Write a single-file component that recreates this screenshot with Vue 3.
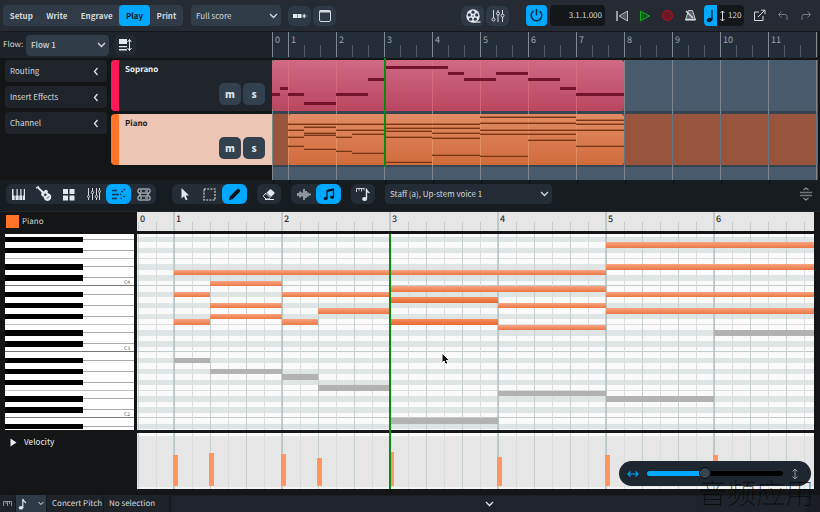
<script setup>
import { ref, computed, onMounted, onUnmounted } from 'vue'

const modes = ['Setup', 'Write', 'Engrave', 'Play', 'Print']
const mode = ref('Play')
const layout = ref('Full score')
const flow = ref('Flow 1')
const voice = ref('Staff (a), Up-stem voice 1')
const zoom = ref(42)

const panels = ['Routing', 'Insert Effects', 'Channel']
const tracks = [
  { name: 'Soprano', cls: 'soprano' },
  { name: 'Piano', cls: 'piano' }
]

// [start beat, length in beats, semitones from C4], 3/4 time, beat 0 = bar 1
const pianoNotes = [
  [0, 12, 2], [1, 2, 0], [0, 1, -2], [1, 2, -4], [1, 2, -6], [0, 1, -7],
  [3, 3, -2], [4, 2, -5], [3, 1, -7],
  [6, 6, -1], [6, 3, -3, 'hot'], [6, 3, -7, 'hot'],
  [9, 3, -4], [9, 3, -8],
  [12, 6, 7], [12, 6, 3], [12, 9, -2], [12, 6, -5],
  [18, 3, 5], [18, 3, 2], [18, 3, -14],
  [15, 3, -9, 'low'], [0, 1, -14, 'low'], [1, 2, -16, 'low'], [3, 1, -17, 'low'],
  [4, 2, -19, 'low'], [6, 3, -25, 'low'], [9, 3, -20, 'low'], [12, 3, -21, 'low']
]

// [x, width, y] in the soprano lane
const sopranoNotes = [
  [0, 8, 61], [8, 8, 55], [16, 16, 61], [32, 32, 70], [64, 32, 61], [96, 16, 46],
  [112, 64, 34], [176, 16, 40], [192, 32, 46], [224, 32, 40], [256, 32, 46],
  [288, 16, 55], [304, 48, 61]
]

// [beat, height]
const velocities = [[0, 31], [1, 33], [3, 32], [4, 28], [6, 34], [9, 29], [12, 31], [15, 31]]

const BLACK = [1, 3, 6, 8, 10]

const winWidth = ref(window.innerWidth)
const onResize = () => { winWidth.value = window.innerWidth }
onMounted(() => window.addEventListener('resize', onResize))
onUnmounted(() => window.removeEventListener('resize', onResize))

const range = n => Array.from({ length: Math.max(0, Math.ceil(n)) }, (_, i) => i)

// widths of the two timelines follow the window
const overviewWidth = computed(() => winWidth.value - 274)
const rollWidth = computed(() => winWidth.value - 143)

const barX = n => 16 + (n - 1) * 48
const rollBarX = n => 37 + (n - 1) * 108
const beatX = b => 37 + b * 36
const rowY = k => Math.round(74 - (k + 1) * 5.5)
const rowH = k => rowY(k - 1) - rowY(k)

const bars = computed(() => range((overviewWidth.value - 16) / 48).map(i => i + 1))
const barLabels = computed(() => bars.value.filter(n => barX(n) + 20 < overviewWidth.value))
const ticks = computed(() => range(overviewWidth.value / 16))
const rollBars = computed(() => range((rollWidth.value - 57) / 108).map(i => i + 1))
const rollTicks = computed(() => range(rollWidth.value / 18))

const overviewNotes = computed(() => pianoNotes.map(([start, len, k]) => ({
  x: 16 + start * 16,
  w: len * 16,
  y: 95 - Math.round(k * 1.39)
})))

const rollNotes = computed(() => pianoNotes.map(([start, len, k, kind]) => ({
  x: beatX(start),
  w: len * 36,
  y: rowY(k),
  h: rowH(k),
  kind: kind || 'warm'
})))

const rows = computed(() => {
  const list = []
  for (let k = 9; k >= -27; k--) {
    const pc = ((k % 12) + 12) % 12
    list.push({ k, pc, y: rowY(k), h: rowH(k), black: BLACK.includes(pc), octave: 4 + Math.floor(k / 12) })
  }
  return list
})
const blackRows = computed(() => rows.value.filter(r => r.black))
const cRows = computed(() => rows.value.filter(r => r.pc === 0))
const fRows = computed(() => rows.value.filter(r => r.pc === 5))
</script>

<template>
  <div class="app">
    <header class="topbar">
      <nav class="modes">
        <button v-for="m in modes" :key="m" :class="{ active: mode === m }" @click="mode = m">{{ m }}</button>
      </nav>
      <div class="select layout-select">
        <select v-model="layout" aria-label="Layout"><option>Full score</option></select>
        <svg class="chev" width="9" height="6" viewBox="0 0 9 6"><path d="M1 1l3.5 3.5L8 1" /></svg>
      </div>
      <div class="pair">
        <button class="tool" aria-label="Add tab">
          <svg width="15" height="12" viewBox="0 0 15 12"><path d="M1 4h4v4H1zM5.500 4h4v4h-4z" fill="#e3e8ec" /><path d="M10 6h4.500M12.200 3.800v4.400" stroke="#e3e8ec" stroke-width="1.200" /></svg>
        </button>
        <button class="tool" aria-label="Window">
          <svg width="14" height="14" viewBox="0 0 14 14"><rect x="1.500" y="1.500" width="11" height="11" rx="1.500" fill="none" stroke="#d5dade" /><path d="M1.500 2.500h11" stroke="#d5dade" stroke-width="2" /></svg>
        </button>
      </div>

      <div class="transport">
        <div class="pair">
          <button class="tool" aria-label="Video">
            <svg width="16" height="16" viewBox="0 0 16 16">
              <circle cx="8" cy="8" r="6.700" fill="#e3e8ec" />
              <g fill="#2e3b47"><circle cx="8" cy="4.200" r="1.600" /><circle cx="4.300" cy="6.900" r="1.600" /><circle cx="11.700" cy="6.900" r="1.600" /><circle cx="5.700" cy="11.200" r="1.600" /><circle cx="10.300" cy="11.200" r="1.600" /><circle cx="8" cy="8" r=".7" /></g>
              <path d="M8 14h7.500" stroke="#dfe4e8" stroke-width="1.200" />
            </svg>
          </button>
          <button class="tool" aria-label="Mixer">
            <svg class="line" width="14" height="14" viewBox="0 0 14 14"><path d="M2.500 1v8M7 1v2M7 6v7M11.500 1v4M11.500 8v5" /><circle cx="2.500" cy="10.500" r="1.500" /><circle cx="7" cy="4.500" r="1.500" /><circle cx="11.500" cy="6.500" r="1.500" /></svg>
          </button>
        </div>
        <button class="power" aria-label="Power">
          <svg width="15" height="15" viewBox="0 0 15 15"><path d="M4.500 3a5.300 5.300 0 1 0 6 0M7.500 1v6.500" fill="none" stroke="#10283a" stroke-width="1.500" /></svg>
        </button>
        <output class="time">3.1.1.000</output>
        <div class="buttons">
          <button class="flat" aria-label="Rewind">
            <svg width="14" height="12" viewBox="0 0 14 12"><path d="M2 1v10" stroke="#c0c4c8" stroke-width="1.500" /><path d="M12.500 1v10L4 6z" fill="#55595e" stroke="#b5b9bd" stroke-linejoin="round" /></svg>
          </button>
          <button class="flat" aria-label="Start">
            <svg width="12" height="12" viewBox="0 0 12 12"><path d="M1.500 1.200v9.600L10.500 6z" fill="#12541f" stroke="#10b41e" stroke-linejoin="round" /></svg>
          </button>
          <button class="flat" aria-label="Record">
            <svg width="13" height="13" viewBox="0 0 13 13"><circle cx="6.500" cy="6.500" r="5" fill="#6b1822" stroke="#b80d22" /></svg>
          </button>
          <button class="flat" aria-label="Click">
            <svg width="13" height="13" viewBox="0 0 13 13"><path d="M4.500 1.500h4l3 9.500h-10z" fill="#5b6066" stroke="#c4c8cc" stroke-linejoin="round" /><path d="M2 2l7 7" stroke="#e0e3e6" stroke-width="1.200" /><path d="M1.500 10.500h10" stroke="#d5d8db" stroke-width="1.500" /></svg>
          </button>
        </div>
        <div class="tempo">
          <button aria-label="Tempo mode">
            <svg width="9" height="16" viewBox="0 0 9 16"><ellipse cx="3.500" cy="12" rx="2.800" ry="2" fill="#0c1a26" transform="rotate(-20 3.500 12)" /><path d="M6 2v10" stroke="#0c1a26" stroke-width="1.200" /></svg>
          </button>
          <svg class="line" width="7" height="12" viewBox="0 0 7 12"><path d="M3.500 1v10M1.500 3l2-2 2 2M1.500 9l2 2 2-2" /></svg>
          <span>120</span>
        </div>
        <div class="buttons">
          <button class="flat" aria-label="Export">
            <svg class="line" width="13" height="13" viewBox="0 0 13 13"><path d="M6 3H1.500v8.500H10V7M5 8l6.500-6.500M8 1.200h4v4" /></svg>
          </button>
          <button class="flat" aria-label="Undo">
            <svg class="line dim" width="12" height="12" viewBox="0 0 12 12"><path d="M4.500 1.500l-3 3 3 3M1.500 4.500H8q2 0 2 2V10" /></svg>
          </button>
          <button class="flat" aria-label="Redo">
            <svg class="line dim" width="12" height="12" viewBox="0 0 12 12"><path d="M7.500 1.500l3 3-3 3M10.500 4.500H4q-2 0-2 2V10" /></svg>
          </button>
        </div>
      </div>
    </header>

    <section class="overview">
      <div class="side">
        <div class="flowbar">
          <label for="flow">Flow:</label>
          <div class="select flow-select">
            <select id="flow" v-model="flow"><option>Flow 1</option></select>
            <svg class="chev" width="9" height="6" viewBox="0 0 9 6"><path d="M1 1l3.5 3.5L8 1" /></svg>
          </div>
          <button class="sort" aria-label="Track height">
            <svg width="14" height="14" viewBox="0 0 14 14"><path d="M1 1h8v5H1zM1 8h8v1.300H1zM1 11h8v1.500H1z" fill="#e3e8ec" /><path d="M11.500 1.500v11M9.500 4l2-2.500 2 2.500M9.500 10l2 2.500 2-2.500" fill="none" stroke="#e3e8ec" /></svg>
          </button>
        </div>
        <div class="side-body">
          <div class="panels">
            <button v-for="p in panels" :key="p" class="panel">
              {{ p }}
              <svg width="6" height="9" viewBox="0 0 6 9"><path d="M4.500 1L1.500 4.500l3 3.500" fill="none" stroke="#e0e4e8" stroke-width="1.300" /></svg>
            </button>
          </div>
          <div class="cards">
            <div v-for="t in tracks" :key="t.name" class="card" :class="t.cls">
              <h3>{{ t.name }}</h3>
              <div class="ms">
                <button aria-label="Mute">m</button>
                <button aria-label="Solo">s</button>
              </div>
            </div>
          </div>
        </div>
      </div>

      <svg class="arrange" height="148">
        <defs>
          <linearGradient id="pink" x2="0" y2="1"><stop stop-color="#cf6a85" /><stop offset="1" stop-color="#ba4660" /></linearGradient>
          <linearGradient id="amber" x2="0" y2="1"><stop stop-color="#e28b65" /><stop offset="1" stop-color="#d06b3c" /></linearGradient>
        </defs>
        <!-- ruler -->
        <rect width="100%" height="26" fill="#232e39" />
        <rect v-for="t in ticks" :key="'t' + t" :x="t * 16" y="13" width="1" height="12" fill="#4e5a65" />
        <rect width="1" height="25" fill="#808a92" />
        <text x="3" y="11" class="bar-no">0</text>
        <rect v-for="n in bars" :key="'b' + n" :x="barX(n)" width="1" height="25" fill="#808a92" />
        <text v-for="n in barLabels" :key="'n' + n" :x="barX(n) + 3" y="11" class="bar-no">{{ n }}</text>
        <!-- lanes -->
        <rect y="28" width="100%" height="120" fill="#485b6c" />
        <rect y="79" width="100%" height="3" fill="#394452" />
        <rect y="82" width="100%" height="51" fill="#98553c" />
        <rect y="133" width="100%" height="2" fill="#394452" />
        <g v-for="n in bars" :key="'l' + n">
          <rect :x="barX(n)" y="28" width="1" height="120" fill="#7d868b" />
          <rect :x="barX(n)" y="82" width="1" height="51" fill="#647681" />
        </g>
        <rect y="28" width="1" height="120" fill="#7d868b" />
        <rect y="28" width="352" height="51" rx="4" fill="url(#pink)" />
        <rect x="16" y="82" width="336" height="51" rx="4" fill="url(#amber)" />
        <rect v-for="n in 7" :key="'o' + n" :x="barX(n)" y="28" width="1" height="51" class="through pinkish" />
        <rect v-for="n in 7" :key="'q' + n" :x="barX(n)" y="82" width="1" height="51" class="through" />
        <rect v-for="(n, i) in sopranoNotes" :key="'s' + i" :x="n[0]" :y="n[2]" :width="n[1]" height="3" fill="#74132a" />
        <g v-for="(n, i) in overviewNotes" :key="'p' + i">
          <rect :x="n.x" :y="n.y - 1" :width="n.w" height="2" fill="#b86238" />
          <rect :x="n.x" :y="n.y" :width="n.w" height="1" fill="#7a3416" />
        </g>
        <rect x="112" y="26" width="2" height="109" fill="#0a8a0e" />
      </svg>
    </section>

    <div class="toolbar">
      <div class="group">
        <button aria-label="Keyboard">
          <svg width="15" height="13" viewBox="0 0 15 13"><path d="M1 1h1.500v6.500h1.200V12H1zM4.500 7.500h1V1h1.200v6.500h1V12H4.500zM8.300 7.500h1V1h1.200v6.500h.8V12h-3zM12.800 1h1.200v11h-2V7.500h.8z" fill="#e3e8ec" /></svg>
        </button>
        <button aria-label="Guitar">
          <svg width="16" height="16" viewBox="0 0 16 16"><path d="M2 1.500l7 7" stroke="#e3e8ec" stroke-width="1.800" /><path d="M0 2.200L2.800.4" stroke="#e3e8ec" stroke-width="1.500" /><path d="M5.200 8.500q-.3-2 1.500-2.800 1.500-.2 2-1.500 1.500-1.200 2.800.2 1 1.200 0 2.600 3 .6 3.800 3.200.3 3-2 4.300-3 1.200-5-1.300-.8-1.300-.6-2.600-2.200.4-2.500-2.100z" fill="#e3e8ec" /><circle cx="9.300" cy="8.800" r="1.200" fill="#242c36" /><path d="M11 12.500l2-2" stroke="#242c36" /></svg>
        </button>
        <button aria-label="Drum pads">
          <svg width="13" height="13" viewBox="0 0 13 13"><path d="M1 1h5v5H1zM7.500 1h5v5h-5zM1 7.500h5v5H1zM7.500 7.500h5v5h-5z" fill="#e3e8ec" /></svg>
        </button>
        <button aria-label="Mixer">
          <svg class="line" width="14" height="14" viewBox="0 0 14 14"><path d="M1.500 1v7M1.500 11v2M5.500 1v3M5.500 7v6M9.500 1v7M9.500 11v2M12.500 1v2M12.500 6v7" /><circle cx="1.500" cy="9.500" r="1" /><circle cx="5.500" cy="5.500" r="1.200" /><circle cx="9.500" cy="9.500" r="1.200" /><circle cx="12.500" cy="4.500" r="1" /></svg>
        </button>
        <button class="active" aria-label="Key editor">
          <svg width="15" height="13" viewBox="0 0 15 13"><path d="M1 2.500h5M1 6.500h7M1 10.500h5M10 3.500h2M9 6.500h1M12 8.500h2M9.500 10.500h1.500M12.500 1.500h1.500" stroke="#103a58" stroke-width="1.500" fill="none" /></svg>
        </button>
        <button aria-label="Rack">
          <svg class="line" width="14" height="13" viewBox="0 0 14 13"><rect x="1" y="1" width="12" height="4" rx="1" /><rect x="1" y="8" width="12" height="4" rx="1" /><path d="M3 3h2M8 3h3M3 10h2M8 10h3M3 5v3M11 5v3" /></svg>
        </button>
      </div>
      <div class="group tools">
        <button aria-label="Select">
          <svg width="10" height="14" viewBox="0 0 10 14"><path d="M1.500 1v10.500L4 9.200l1.700 4 1.800-.8-1.700-3.800 3.300-.2z" fill="#e3e8ec" /></svg>
        </button>
        <button aria-label="Marquee">
          <svg width="13" height="13" viewBox="0 0 13 13"><rect x="1" y="1" width="11" height="11" fill="none" stroke="#d8dde1" stroke-width="1.200" stroke-dasharray="2 1.200" /></svg>
        </button>
        <button class="active" aria-label="Draw">
          <svg width="13" height="13" viewBox="0 0 13 13"><path d="M.8 12.200l1.200-4L8.800 1.400q1.500-1.200 2.800 0 1.200 1.200 0 2.700L4.800 11z" fill="#06121c" /></svg>
        </button>
      </div>
      <button class="single" aria-label="Erase">
        <svg width="14" height="13" viewBox="0 0 14 13"><path d="M7.800 1.500q.8-.6 1.500 0l3 2.800q.6.700 0 1.400L9 9 4.600 4.700z" fill="#e3e8ec" /><path d="M4 5.400l4.200 4.200L6.700 11H4L1.500 8.500q-.5-.6 0-1.100z" fill="none" stroke="#e3e8ec" /><path d="M3 11.500h9" stroke="#e3e8ec" /></svg>
      </button>
      <div class="group views">
        <button aria-label="Played durations">
          <svg width="14" height="13" viewBox="0 0 14 13"><path d="M1 5v3M3 3.500v6M5 4.500v4M7 1v11M9 3v7M11 4.500v4M13 5.500v2" stroke="#c8ced3" stroke-width="1.300" /></svg>
        </button>
        <button class="active" aria-label="Notated durations">
          <svg width="12" height="13" viewBox="0 0 12 13"><path d="M4 10V2.500L10.500 1v8" fill="none" stroke="#06121c" stroke-width="1.200" /><path d="M4 3.200l6.500-1.500" stroke="#06121c" stroke-width="1.800" /><ellipse cx="2.600" cy="10.500" rx="2" ry="1.500" fill="#06121c" /><ellipse cx="9" cy="9.300" rx="2" ry="1.500" fill="#06121c" /></svg>
        </button>
      </div>
      <button class="single" aria-label="Grid">
        <svg width="16" height="15" viewBox="0 0 16 15"><path d="M1.500 5V1.500h8M4 1.500v2M6.500 1.500v3M9 1.500v2" fill="none" stroke="#c8ced3" /><path d="M11.500 1.500v10M11.500 2.500q.5 2 3 3.500" fill="none" stroke="#e3e8ec" stroke-width="1.400" /><ellipse cx="9.600" cy="12" rx="2.500" ry="2" fill="#e3e8ec" /></svg>
      </button>
      <div class="select voice-select">
        <select v-model="voice" aria-label="Voice"><option>Staff (a), Up-stem voice 1</option></select>
        <svg class="chev" width="9" height="6" viewBox="0 0 9 6"><path d="M1 1l3.5 3.5L8 1" /></svg>
      </div>
      <svg class="splitter" width="12" height="14" viewBox="0 0 12 14"><path d="M3.500 3L6 1l2.500 2M3.500 11L6 13l2.500-2" fill="none" stroke="#8c9195" stroke-width="1.200" /><path d="M0 5.500h12M0 8.500h12" stroke="#70767a" stroke-width="1.500" /></svg>
    </div>

    <section class="editor">
      <div class="editor-side">
        <div class="track-name"><i></i>Piano</div>
        <svg class="keys" width="129" height="196">
          <g transform="translate(0 -22)">
            <rect y="22" width="129" height="196" fill="#fff" />
            <rect v-for="r in fRows" :key="'f' + r.k" :y="r.y + r.h - 1" width="129" height="1" fill="#bfbfbf" />
            <rect v-for="r in blackRows" :key="'w' + r.k" x="78" :y="r.y + 2" width="51" height="1" fill="#a9a9a9" />
            <rect v-for="r in blackRows" :key="'k' + r.k" :y="r.y" width="78" :height="r.h" fill="#000" />
            <g v-for="r in cRows" :key="'c' + r.k">
              <rect :y="r.y + r.h - 1" width="129" height="1" fill="#777" />
              <text x="119" :y="r.y + 3" class="key-name">C{{ r.octave }}</text>
            </g>
          </g>
        </svg>
        <button class="velocity">
          <svg width="7" height="9" viewBox="0 0 7 9"><path d="M.5.5v8l6-4z" fill="#e8ebee" /></svg>
          Velocity
        </button>
      </div>

      <div class="roll">
        <svg class="canvas" height="277">
          <defs>
            <linearGradient id="warm" x2="0" y2="1"><stop stop-color="#f9a482" /><stop offset="1" stop-color="#ea7843" /></linearGradient>
            <linearGradient id="hot" x2="0" y2="1"><stop stop-color="#f68d5e" /><stop offset="1" stop-color="#e8682e" /></linearGradient>
          </defs>
          <!-- ruler -->
          <rect width="100%" height="19" fill="#e6e6e6" />
          <!-- key rows -->
          <rect y="22" width="100%" height="196" fill="#fafafa" />
          <rect v-for="r in blackRows" :key="'r' + r.k" :y="r.y" width="100%" :height="r.h" fill="#dfe5e4" />
          <rect v-for="r in fRows" :key="'f' + r.k" :y="r.y + r.h - 1" width="100%" height="1" fill="#dedede" />
          <rect v-for="r in cRows" :key="'c' + r.k" :y="r.y + r.h - 1" width="100%" height="1" fill="#c3cccb" />
          <!-- velocity lane -->
          <rect y="221" width="100%" height="56" fill="#e6e6e6" />
          <rect y="221" width="100%" height="3" fill="#fafafa" />
          <rect y="275" width="100%" height="2" fill="#f3f3f3" />
          <g v-for="t in rollTicks" :key="'t' + t">
            <rect :x="1 + t * 18" y="10" width="1" height="9" fill="#c5cccb" />
            <rect :x="1 + t * 18" y="22" width="1" height="255" :class="t % 2 ? 'beat-half' : 'beat'" />
          </g>
          <g v-for="n in rollBars" :key="'b' + n">
            <rect :x="rollBarX(n) - 1" width="2" height="277" class="barline" />
            <text :x="rollBarX(n) + 2" y="10" class="roll-no">{{ n }}</text>
          </g>
          <text x="3" y="10" class="roll-no">0</text>
          <rect y="19" width="100%" height="3" fill="#121415" />
          <rect y="218" width="100%" height="3" fill="#17191b" />
          <rect v-for="(n, i) in rollNotes" :key="'n' + i" :x="n.x" :y="n.y" :width="n.w" :height="n.h" :class="n.kind" />
          <rect v-for="v in velocities" :key="'v' + v[0]" :x="beatX(v[0]) - 1" :y="274 - v[1]" width="5" :height="v[1]" fill="#ff9563" />
          <rect x="252" y="22" width="2" height="255" fill="#0a8a0e" />
          <path transform="translate(305 141)" d="M0 0v9.500l2.200-2 1.600 3.500 1.600-.8L3.900 7h3z" fill="#111" stroke="#fff" stroke-width=".5" />
        </svg>
        <div class="zoom">
          <svg width="12" height="8" viewBox="0 0 12 8"><path d="M1 4h10M3.500 1.500L1 4l2.500 2.500M8.500 1.500L11 4 8.500 6.500" fill="none" stroke="#00a2f2" stroke-width="1.200" /></svg>
          <input v-model="zoom" type="range" min="0" max="100" aria-label="Zoom">
          <svg width="8" height="12" viewBox="0 0 8 12"><path d="M4 1v10M1.500 3.500L4 1l2.500 2.500M1.500 8.500L4 11l2.500-2.500" fill="none" stroke="#929aa1" /></svg>
        </div>
      </div>
    </section>

    <footer class="status">
      <span class="cell ruler-cell">
        <svg width="9" height="5" viewBox="0 0 9 5"><path d="M.5 5V.5h8V5M3 0v3M4.500 0v5M6.500 0v3" fill="none" stroke="#8b929a" /></svg>
      </span>
      <button class="cell note-cell" aria-label="Rhythmic grid">
        <svg width="9" height="12" viewBox="0 0 9 12"><ellipse cx="3" cy="9.800" rx="2.300" ry="1.800" fill="#dfe4e8" /><path d="M4.800 10V1q.5 2 3.200 4" fill="none" stroke="#dfe4e8" stroke-width="1.200" /></svg>
        <svg width="6" height="5" viewBox="0 0 6 5"><path d="M.5 1L3 3.500 5.500 1" fill="none" stroke="#dfe4e8" /></svg>
      </button>
      <span class="cell pitch">Concert Pitch</span>
      <span class="cell selection">No selection</span>
      <button class="drawer" aria-label="Show panel">
        <svg width="9" height="6" viewBox="0 0 9 6"><path d="M1 1l3.500 3.500L8 1" fill="none" stroke="#e0e4e8" stroke-width="1.300" /></svg>
      </button>
    </footer>
    <div class="mark">音频应用</div>
  </div>
</template>

<style>
body {
  margin: 0;
  background: #131517;
}
</style>

<style scoped>
* {
  box-sizing: border-box;
}

.app {
  position: relative;
  display: flex;
  flex-direction: column;
  min-height: 100vh;
  overflow: hidden;
  background: #131517;
  color: #d3d8dc;
  font: 8px/12px "Noto Sans CJK SC", sans-serif;
  text-rendering: geometricPrecision;
  white-space: nowrap;
}

button,
select {
  font: inherit;
  color: inherit;
  border: 0;
  margin: 0;
  padding: 0;
  background: none;
}

button {
  display: flex;
  align-items: center;
  justify-content: center;
}

svg {
  display: block;
  flex: none;
}

.line {
  fill: none;
  stroke: #d5dade;
}

.line.dim {
  stroke: #737980;
}

.topbar {
  display: flex;
  align-items: center;
  height: 32px;
  padding: 0 3px;
  background: #262b33;
  border-bottom: 1px solid #14171b;
}

.modes {
  display: flex;
  width: 180px;
  height: 21px;
  border-radius: 4px;
  background: #303b47;
  font-weight: 700;
}

.modes button {
  flex: auto;
  border-radius: 4px;
}

.modes .active {
  background: #00a8ff;
  color: #0b1a26;
}

.select {
  display: grid;
  align-items: center;
  height: 21px;
  border-radius: 4px;
  background: #303c48;
}

.select > * {
  grid-area: 1 / 1;
}

.select select {
  appearance: none;
  width: 100%;
  height: 100%;
  padding-left: 5px;
}

.chev {
  justify-self: end;
  margin-right: 3px;
  fill: none;
  stroke: #d5dade;
  stroke-width: 1.3;
  pointer-events: none;
}

.layout-select {
  width: 90px;
  margin: 0 7px 0 8px;
}

.pair,
.buttons {
  display: flex;
  gap: 2px;
}

.buttons {
  gap: 0;
}

.tool {
  width: 23px;
  height: 20px;
  border-radius: 6px;
  background: #2e3b47;
}

.transport {
  display: flex;
  align-items: center;
  margin-left: auto;
}

.power {
  width: 21px;
  height: 21px;
  margin: 0 3px 0 17px;
  border-radius: 4px;
  background: #00a8ff;
}

.time {
  width: 55px;
  height: 21px;
  margin-right: 5px;
  padding-right: 3px;
  border-radius: 4px;
  background: #14171a;
  line-height: 21px;
  text-align: right;
}

.flat {
  width: 23px;
  height: 21px;
}

.tempo {
  display: flex;
  align-items: center;
  width: 40px;
  height: 21px;
  margin: 0 4px 0 2px;
  gap: 2px;
  overflow: hidden;
  border-radius: 4px;
  background: #14171a;
}

.tempo button {
  width: 13px;
  height: 21px;
  background: #00a8ff;
}

.overview {
  display: grid;
  grid-template-columns: 272px minmax(0, 1fr);
  height: 148px;
  padding-right: 2px;
}

.flowbar {
  display: flex;
  align-items: center;
  height: 26px;
  padding-left: 3px;
  background: #1e2229;
}

.flowbar label {
  width: 23px;
}

.flow-select {
  width: 83px;
  font-weight: 500;
}

.sort {
  width: 22px;
  height: 20px;
  margin-left: 5px;
  border-radius: 5px;
  background: #232a32;
}

.side-body {
  display: flex;
  gap: 4px;
  padding: 2px 0 0 5px;
}

.panels {
  display: flex;
  flex-direction: column;
  gap: 4px;
  width: 102px;
}

.panel {
  justify-content: space-between;
  height: 22px;
  padding: 0 8px 0 5px;
  border-radius: 4px;
  background: #1f242b;
}

.cards {
  display: flex;
  flex: 1;
  flex-direction: column;
  gap: 3px;
}

.card {
  display: flex;
  flex-direction: column;
  justify-content: space-between;
  height: 51px;
  padding: 4px 7px 6px 6px;
  border-left: 8px solid #ff1a57;
  border-radius: 4px 0 0 4px;
  background: #1f252b;
  color: #f2f4f6;
}

.card.piano {
  border-color: #ff7427;
  background: #ecc5b5;
  color: #1d1413;
}

h3 {
  margin: 0;
  font-size: 8px;
}

.ms {
  display: flex;
  justify-content: flex-end;
  gap: 2px;
}

.ms button {
  width: 22px;
  height: 22px;
  border-radius: 5px;
  background: #33414e;
  color: #dfe4e8;
  font-size: 10px;
  font-weight: 900;
}

.arrange,
.canvas {
  width: 100%;
  shape-rendering: crispEdges;
}

.bar-no {
  fill: #a0a8af;
  font-size: 9px;
}

.through {
  fill: #e79a74;
  opacity: 0.7;
}

.pinkish {
  fill: #e0707f;
}

.toolbar {
  display: flex;
  align-items: center;
  height: 32px;
  padding: 0 8px 3px 6px;
  background: #171c20;
  border-bottom: 1px solid #222629;
}

.group,
.single {
  display: flex;
  height: 20px;
  border-radius: 6px;
  background: #242c36;
}

.group button {
  width: 25px;
  border-radius: 6px;
}

.group .active {
  background: #00a8ff;
}

.tools {
  margin: 0 10px 0 16px;
}

.single {
  width: 24px;
}

.views {
  margin: 0 10px;
}

.voice-select {
  width: 167px;
  height: 20px;
  margin-left: 10px;
  background: #242c36;
}

.splitter {
  margin-left: auto;
}

.editor {
  display: grid;
  grid-template-columns: 137px minmax(0, 1fr);
  padding-right: 6px;
}

.track-name {
  display: flex;
  align-items: center;
  gap: 3px;
  height: 22px;
  padding: 0 0 3px 6px;
}

.track-name i {
  width: 13px;
  height: 13px;
  background: #ff7427;
}

.keys {
  margin-left: 5px;
}

.key-name {
  fill: #555;
  font-size: 5px;
}

.velocity {
  gap: 7px;
  height: 24px;
  padding-left: 10px;
  font-weight: 500;
}

.roll {
  position: relative;
}

.roll-no {
  fill: #2f3336;
  font-size: 9px;
  font-weight: 500;
}

.barline {
  fill: #b3c0c0;
  opacity: 0.7;
}

.beat {
  fill: #c5cfce;
}

.beat-half {
  fill: #d8dedd;
}

.warm {
  fill: url(#warm);
}

.hot {
  fill: url(#hot);
}

.low {
  fill: #b2b2b2;
}

.zoom {
  position: absolute;
  right: 3px;
  bottom: 3px;
  display: flex;
  align-items: center;
  gap: 8px;
  height: 25px;
  padding: 0 12px 0 8px;
  border-radius: 13px;
  background: #1e2630;
}

.zoom input {
  appearance: none;
  width: 136px;
  height: 13px;
  margin: 0;
  background: none;
}

.zoom input::-webkit-slider-runnable-track {
  height: 5px;
  border-radius: 3px;
  background: linear-gradient(90deg, #00a8ff 42%, #000 42%);
}

.zoom input::-webkit-slider-thumb {
  appearance: none;
  width: 12px;
  height: 12px;
  margin-top: -4px;
  border: 1px solid #05080a;
  border-radius: 50%;
  background: #364450;
}

.status {
  display: flex;
  height: 17px;
  margin-top: 6px;
  background: #1a1e24;
}

.cell {
  display: flex;
  align-items: center;
  padding: 0 5px;
  border-right: 1px solid #15181c;
  background: #1e232a;
}

.ruler-cell {
  width: 16px;
  padding: 0 3px;
}

.note-cell {
  gap: 11px;
  width: 31px;
  background: #2e3a46;
}

.pitch {
  width: 57px;
}

.selection {
  width: 66px;
}

.drawer {
  flex: 1;
  margin: 1px 13px 0 1px;
  border-radius: 4px;
  background: #1f242c;
}

.mark {
  position: absolute;
  right: 6px;
  bottom: 3px;
  color: rgba(0, 0, 0, 0.7);
  font-size: 29px;
  font-weight: 100;
  line-height: 34px;
  pointer-events: none;
}
</style>
